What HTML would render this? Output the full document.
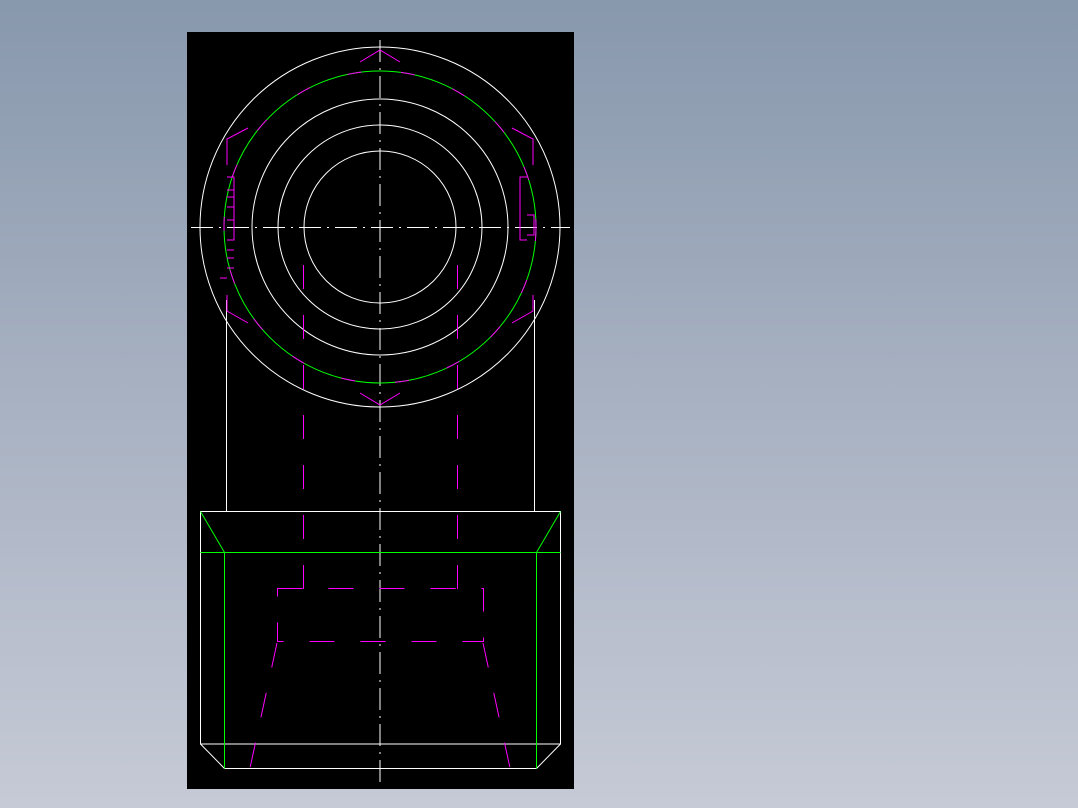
<!DOCTYPE html>
<html><head><style>
html,body{margin:0;padding:0;}
body{width:1078px;height:808px;background:linear-gradient(180deg,#8898ad 0%,#a5afc0 45%,#c6cad6 100%);position:relative;overflow:hidden;}
svg{position:absolute;left:0;top:0;}
</style></head><body>
<svg width="1078" height="808" viewBox="0 0 1078 808">
<rect x="187" y="32" width="387" height="757" fill="#000"/>
<g fill="none" stroke="#fff" stroke-width="1">
<circle cx="380" cy="227" r="180"/>
<circle cx="380" cy="227" r="128"/>
<circle cx="380" cy="227" r="102"/>
<circle cx="380" cy="227" r="76"/>
<line x1="380" y1="40" x2="380" y2="785" stroke-dasharray="22,6,2,6"/>
<line x1="191" y1="227.5" x2="570" y2="227.5" stroke-dasharray="22,6,2,6"/>
<line x1="226.5" y1="300" x2="226.5" y2="511"/>
<line x1="534.5" y1="300" x2="534.5" y2="511"/>
<rect x="200.5" y="511.5" width="360" height="232.5"/>
<line x1="224.5" y1="768.5" x2="536.5" y2="768.5"/>
<line x1="200.5" y1="744" x2="224.5" y2="768.5"/>
<line x1="560.5" y1="744" x2="536.5" y2="768.5"/>
</g>
<g fill="none" stroke="#00ff00" stroke-width="1">
<circle cx="380" cy="227" r="156"/>
<line x1="200.5" y1="552.5" x2="560.5" y2="552.5"/>
<line x1="224.5" y1="552.5" x2="224.5" y2="768.5"/>
<line x1="536.5" y1="552.5" x2="536.5" y2="768.5"/>
<line x1="200.5" y1="511.5" x2="224.5" y2="552.5"/>
<line x1="560.5" y1="511.5" x2="536.5" y2="552.5"/>
</g>
<g fill="none" stroke="#ff00ff" stroke-width="1">
<circle cx="380" cy="227" r="156" stroke-dasharray="14,40"/>
<polyline points="360,62 380,50 400,62"/>
<polyline points="360,393 380,405 400,393"/>
<polyline points="248,128 227,139 227,165"/>
<polyline points="248,323 227,311 227,295"/>
<polyline points="512,128 533,139 533,165"/>
<polyline points="512,323 533,311 533,295"/>
<path d="M227,177h7v63h-7M227,190h7M227,197h7M227,207h7M227,220h7M227,250h7M227,258h7M227,268h7M227,278h-7"/>
<path d="M527,177h-7v63h7M527,215h7v20h-7"/>
<line x1="303.5" y1="265" x2="303.5" y2="590" stroke-dasharray="24,26"/>
<line x1="457.5" y1="265" x2="457.5" y2="590" stroke-dasharray="24,26"/>
<rect x="277.5" y="588.5" width="206" height="53" stroke-dasharray="25,26"/>
<line x1="277" y1="643" x2="250" y2="768" stroke-dasharray="25,26"/>
<line x1="483" y1="643" x2="510" y2="768" stroke-dasharray="25,26"/>
</g>
</svg>
</body></html>
